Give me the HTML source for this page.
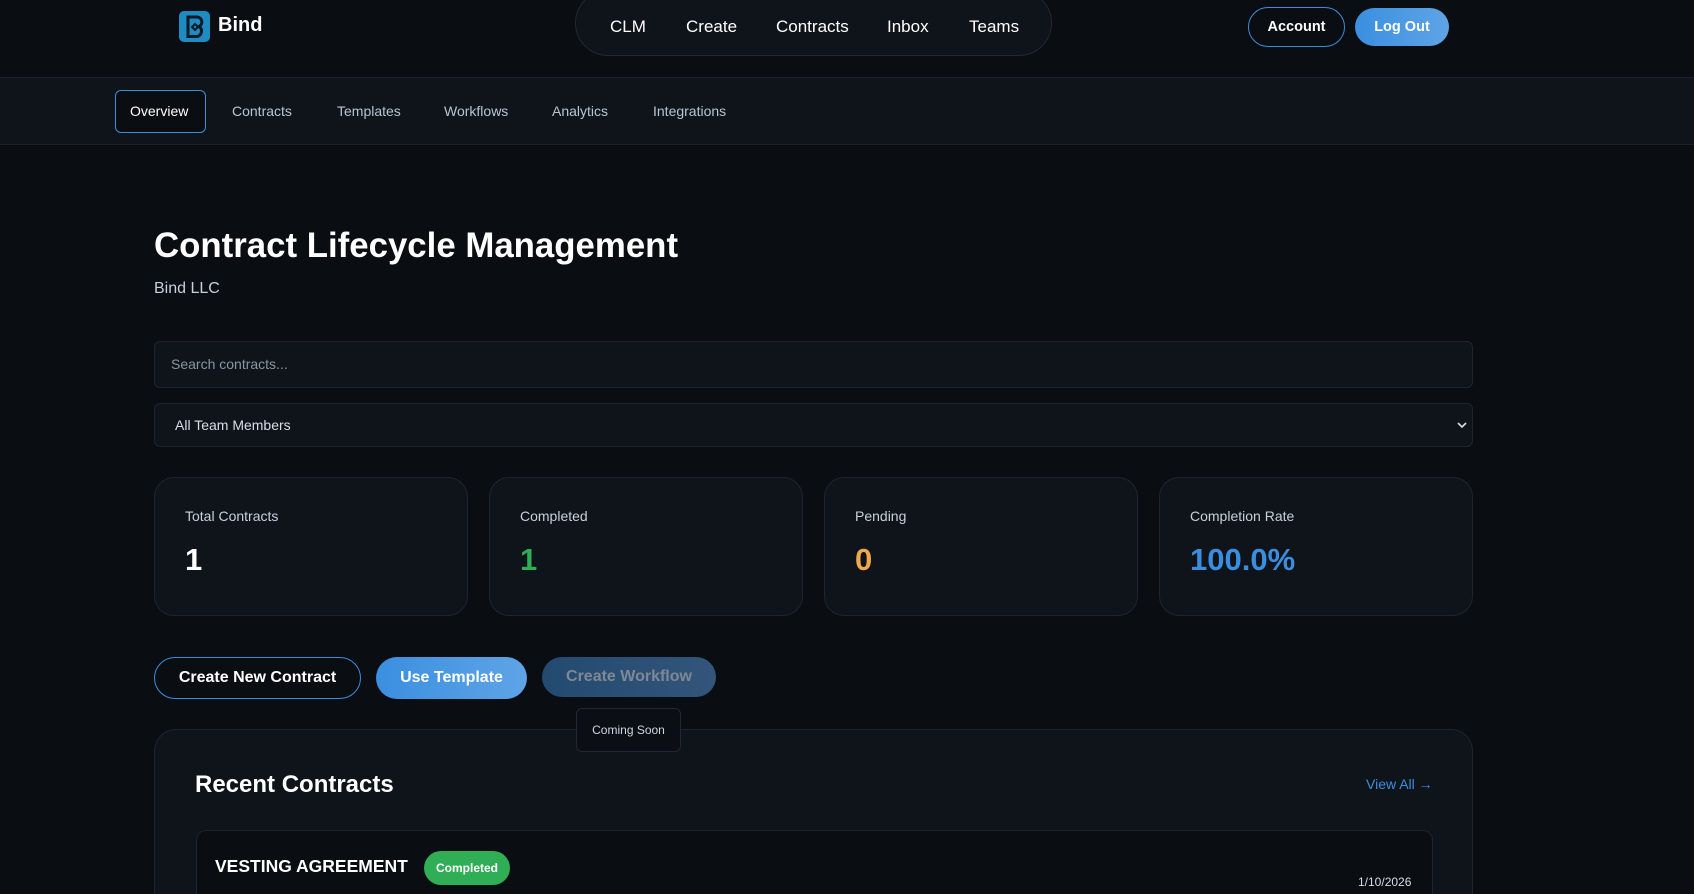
<!DOCTYPE html>
<html><head><meta charset="utf-8"><style>
*{box-sizing:border-box;margin:0;padding:0}
html{width:1694px;height:894px;overflow:hidden;background:#0a0d12}
body{width:1694px;height:894px;overflow:hidden;background:#0a0d12;font-family:"Liberation Sans",sans-serif;color:#fff;position:relative}
.a{position:absolute}
.nav{left:575px;top:-10px;width:477px;height:66px;border:1px solid #232830;border-radius:33px;background:#0f141b}
.ni{font-size:17px;top:17px}
.btn{border-radius:22px;font-weight:bold;display:flex;align-items:center;justify-content:center}
.tab{font-size:14px;color:#b8c4d4;top:103px}
.card{width:314px;height:139px;top:477px;background:#0f141b;border:1px solid #1f252d;border-radius:20px}
.card .l{position:absolute;left:30px;top:30px;font-size:14px;color:#c8d0da}
.card .v{position:absolute;left:30px;top:64px;font-size:31px;font-weight:bold}
</style></head><body>
<div class="a" style="left:179px;top:11px;width:31px;height:31px;background:#1e8bc3;border-radius:5px"></div>
<svg class="a" style="left:179px;top:11px" width="31" height="31" viewBox="0 0 31 31"><path d="M9 6h9a5 5 0 0 1 2 9.5a5.5 5.5 0 0 1-2 10H9z" fill="none" stroke="#0a1a25" stroke-width="3"/><path d="M13 16l3-3 3 3-3 3z" fill="none" stroke="#0a1a25" stroke-width="2"/></svg>
<div class="a" style="left:218px;top:14px;font-size:20px;font-weight:bold">Bind</div>
<div class="a nav"></div>
<div class="a ni" style="left:610px">CLM</div>
<div class="a ni" style="left:686px">Create</div>
<div class="a ni" style="left:776px">Contracts</div>
<div class="a ni" style="left:887px">Inbox</div>
<div class="a ni" style="left:969px">Teams</div>
<div class="a btn" style="left:1248px;top:7px;width:97px;height:40px;border:1px solid #3a8ee0;font-size:14.5px">Account</div>
<div class="a btn" style="left:1355px;top:8px;width:94px;height:38px;background:linear-gradient(90deg,#3a8fe0,#5fa4e6);font-size:14.5px">Log Out</div>
<div class="a" style="left:0;top:77px;width:1694px;height:68px;background:#0f141b;border-top:1px solid #1c2129;border-bottom:1px solid #1c2129"></div>
<div class="a" style="left:115px;top:90px;width:91px;height:43px;border:1px solid #3a8ee0;border-radius:6px;background:#0a0d12"></div>
<div class="a tab" style="left:130px;color:#fff">Overview</div>
<div class="a tab" style="left:232px">Contracts</div>
<div class="a tab" style="left:337px">Templates</div>
<div class="a tab" style="left:444px">Workflows</div>
<div class="a tab" style="left:552px">Analytics</div>
<div class="a tab" style="left:653px">Integrations</div>
<div class="a" style="left:154px;top:226px;font-size:34.8px;font-weight:bold">Contract Lifecycle Management</div>
<div class="a" style="left:154px;top:280px;font-size:16px;color:#c8d0da">Bind LLC</div>
<div class="a" style="left:154px;top:341px;width:1319px;height:47px;background:#0f141b;border:1px solid #1f252d;border-radius:6px"></div>
<div class="a" style="left:171px;top:356px;font-size:14px;color:#8a94a2">Search contracts...</div>
<div class="a" style="left:154px;top:403px;width:1319px;height:44px;background:#0f141b;border:1px solid #1f252d;border-radius:6px"></div>
<div class="a" style="left:175px;top:417px;font-size:14px;color:#d8dee6">All Team Members</div>
<svg class="a" style="left:1457px;top:421px" width="10" height="8"><path d="M1 2l4 4 4-4" stroke="#ddd" stroke-width="1.6" fill="none"/></svg>
<div class="a card" style="left:154px"><div class="l">Total Contracts</div><div class="v">1</div></div>
<div class="a card" style="left:489px"><div class="l">Completed</div><div class="v" style="color:#2fae55">1</div></div>
<div class="a card" style="left:824px"><div class="l">Pending</div><div class="v" style="color:#f0a94a">0</div></div>
<div class="a card" style="left:1159px"><div class="l">Completion Rate</div><div class="v" style="color:#3a8ee0">100.0%</div></div>
<div class="a btn" style="left:154px;top:657px;width:207px;height:42px;border:1px solid #3a8ee0;font-size:16px">Create New Contract</div>
<div class="a btn" style="left:376px;top:657px;width:151px;height:42px;background:linear-gradient(90deg,#3a8fe0,#5fa4e6);font-size:16px">Use Template</div>
<div class="a btn" style="left:542px;top:657px;width:174px;height:40px;background:linear-gradient(90deg,#234a70,#33557a);font-size:16px;color:#7f8894">Create Workflow</div>
<div class="a" style="left:154px;top:729px;width:1319px;height:165px;background:#0f141b;border:1px solid #1f252d;border-bottom:none;border-radius:22px 22px 0 0"></div>
<div class="a" style="left:576px;top:708px;width:105px;height:44px;background:#0b0f15;border:1px solid #232830;border-radius:6px;font-size:12px;color:#d0d6de;display:flex;align-items:center;justify-content:center">Coming Soon</div>
<div class="a" style="left:195px;top:771px;font-size:24px;font-weight:bold">Recent Contracts</div>
<div class="a" style="left:1366px;top:776px;font-size:14px;color:#3a8ee0">View All →</div>
<div class="a" style="left:196px;top:830px;width:1237px;height:64px;background:#0a0d12;border:1px solid #1f252d;border-bottom:none;border-radius:10px 10px 0 0"></div>
<div class="a" style="left:215px;top:856px;font-size:17.5px;font-weight:bold">VESTING AGREEMENT</div>
<div class="a btn" style="left:424px;top:851px;width:86px;height:34px;background:#2fae55;border-radius:17px;font-size:12px">Completed</div>
<div class="a" style="left:1358px;top:875px;font-size:12px;color:#d8dee6">1/10/2026</div>
</body></html>
